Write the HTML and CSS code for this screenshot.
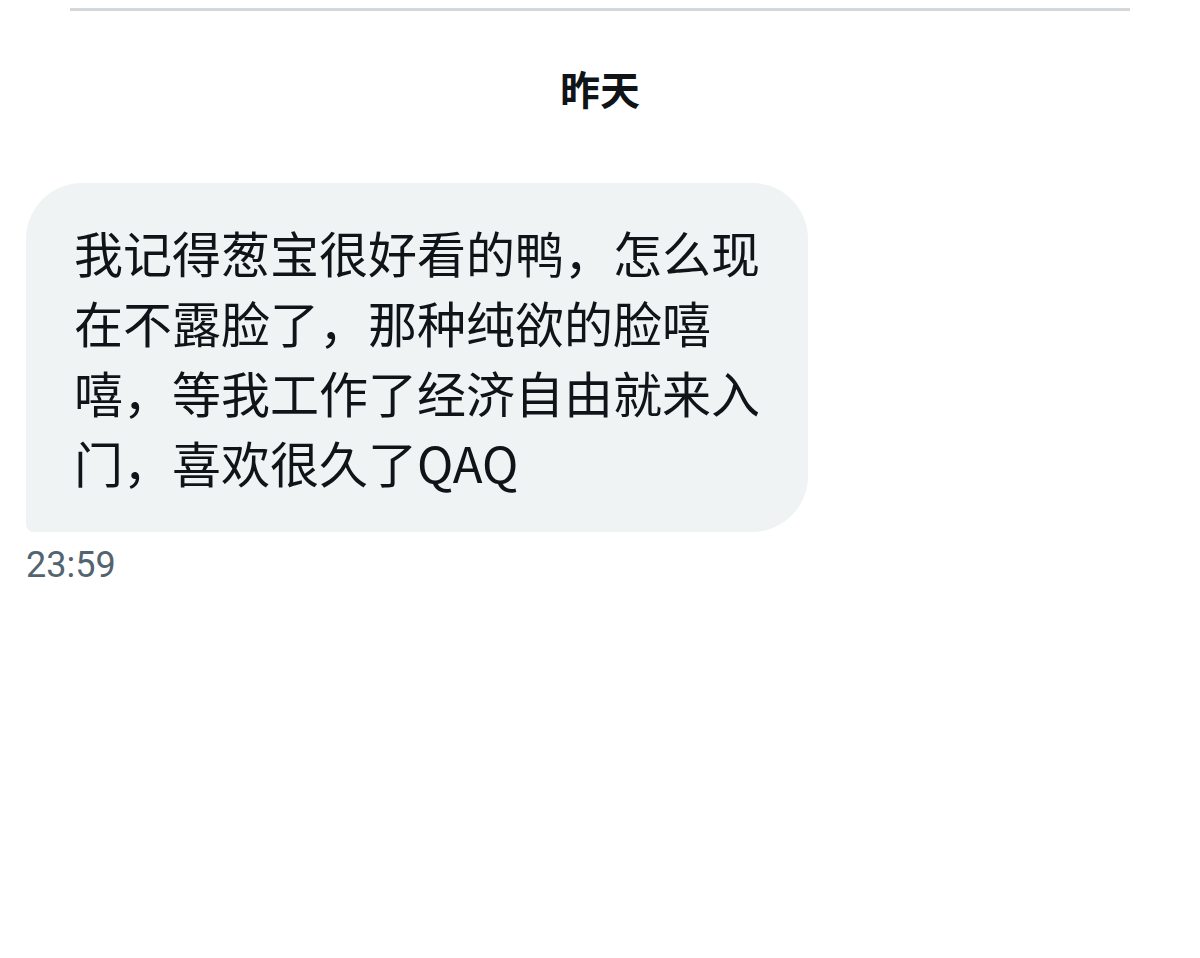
FILE: index.html
```html
<!DOCTYPE html>
<html lang="zh-CN">
<head>
    <meta charset="UTF-8">
    <meta name="viewport" content="width=device-width, initial-scale=1.0">
    <title>私信</title>
    <link rel="stylesheet" href="styles.css">
</head>
<body>
    <div class="thread">
        <div class="divider"></div>
        <div class="day">昨天</div>
        <div class="message">
            <div class="bubble">我记得葱宝很好看的鸭，怎么现在不露脸了，那种纯欲的脸嘻嘻，等我工作了经济自由就来入门，喜欢很久了QAQ</div>
            <div class="time">23:59</div>
        </div>
    </div>
</body>
</html>
```

FILE: styles.css
```css
body {
    margin: 0;
    background-color: #ffffff;
    font-family: "Noto Sans CJK SC", "Noto Sans", sans-serif;
    color: #0f1419;
}
.thread {
    padding-top: 8px;
}
.divider {
    height: 3px;
    margin: 0 70px;
    background-color: #d3d8dd;
}
.day {
    text-align: center;
    font-size: 40px;
    font-weight: bold;
    line-height: 56px;
    margin-top: 49px;
}
.message {
    margin-top: 67px;
    padding-left: 26px;
}
.bubble {
    width: 686px;
    padding: 34px 48px 35px;
    background-color: #eff3f4;
    border-radius: 56px 56px 56px 8px;
    font-size: 49px;
    line-height: 70px;
}
.time {
    margin-top: 12px;
    font-family: Roboto, "Liberation Sans", sans-serif;
    font-size: 36px;
    line-height: 42px;
    color: #536471;
}
```
